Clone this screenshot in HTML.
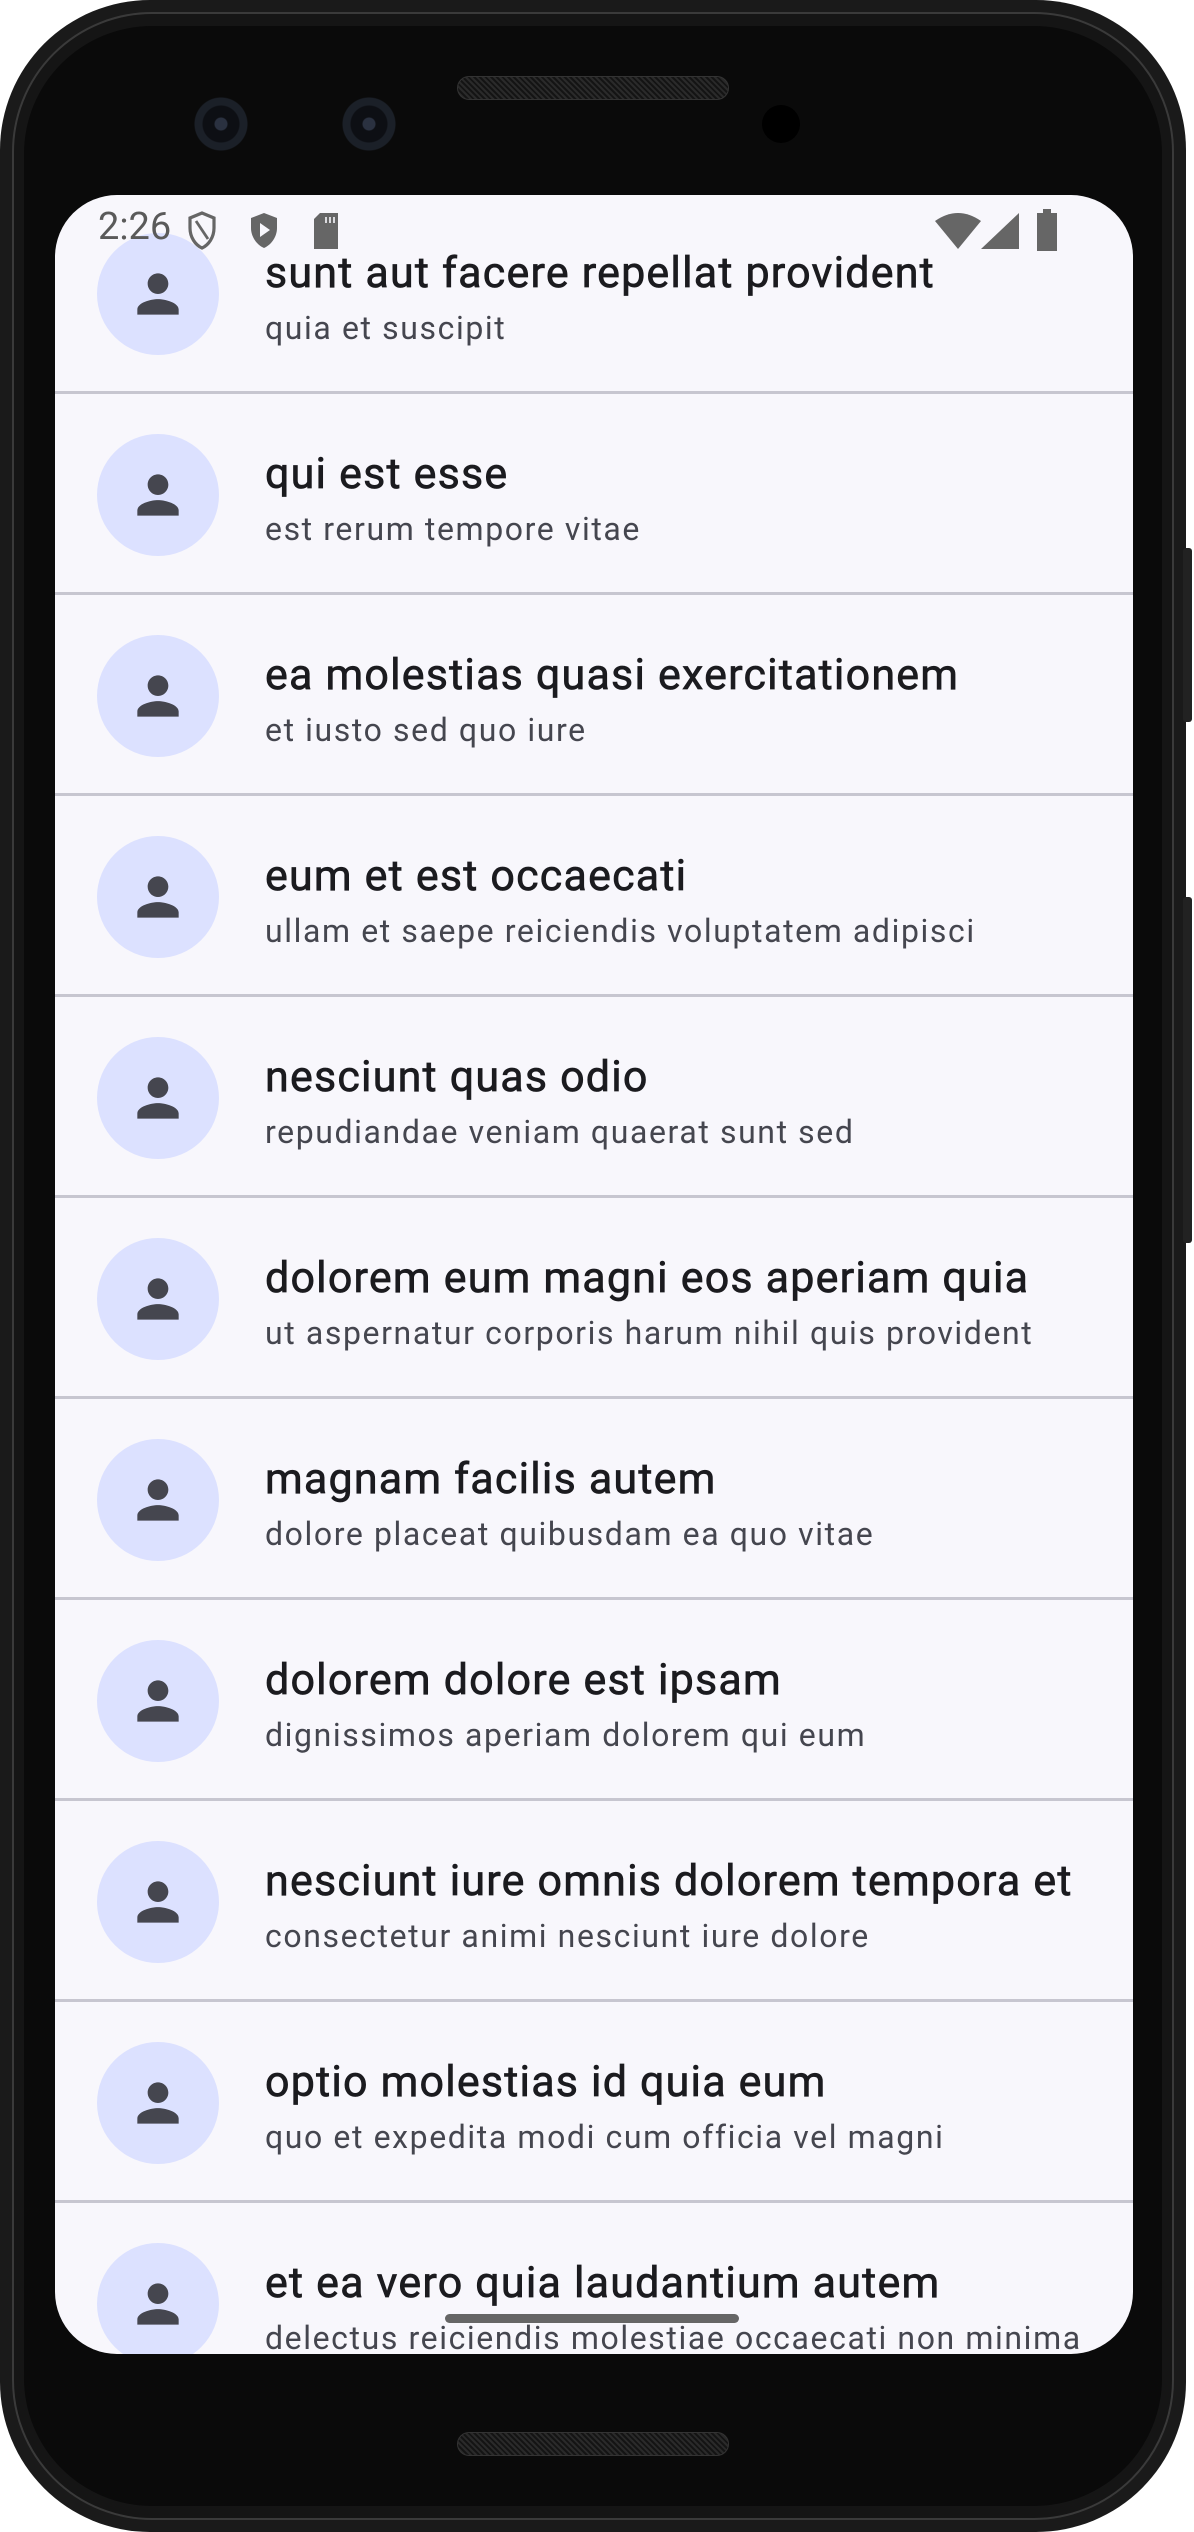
<!DOCTYPE html>
<html><head><meta charset="utf-8"><style>
*{margin:0;padding:0;box-sizing:border-box}
html,body{width:1194px;height:2532px;background:#fff;overflow:hidden}
body{position:relative;font-family:"Roboto","Liberation Sans",sans-serif}
.phone{position:absolute;left:0;top:0;width:1186px;height:2532px;background:#1a1a1a;border-radius:150px;}
.bez{position:absolute;left:12px;top:12px;right:12px;bottom:12px;border-radius:140px;background:#151515;border:2px solid #3a3a3a}
.inner{position:absolute;left:24px;top:26px;right:24px;bottom:26px;border-radius:128px;background:#0a0a0a}
.btn{position:absolute;left:1183px;width:9px;background:#222;border-radius:3px}
.spk{position:absolute;left:457px;width:272px;height:24px;border-radius:12px;background:repeating-linear-gradient(45deg,#2a2a2a 0 2px,#141414 2px 4px);border:1px solid #333}
.cam{position:absolute;width:56px;height:56px;border-radius:50%;background:radial-gradient(circle,#2a3140 0 6px,#0d0f14 7px 18px,#1b2028 19px 26px,#0a0a0a 27px)}
.screen{position:absolute;left:55px;top:195px;width:1078px;height:2159px;border-radius:62px;background:#f8f7fc;overflow:hidden}
.row{position:absolute;left:0;width:1078px;height:201px;border-bottom:3px solid #c7c6d0}
.av{position:absolute;left:42px;top:40px;width:122px;height:122px;border-radius:50%;background:#dce1ff}
.av svg{position:absolute;left:30px;top:30px;width:62px;height:62px}
.t{position:absolute;left:210px;top:55px;font-size:43px;color:#1b1b1f;white-space:nowrap;letter-spacing:1.2px;-webkit-text-stroke:0.7px #1b1b1f}
.s{position:absolute;left:210px;top:116px;font-size:32px;color:#45464f;white-space:nowrap;letter-spacing:1.6px}
.sb{position:absolute;left:0;top:0;width:1078px;height:70px}
.time{position:absolute;left:43px;top:10px;font-size:38px;color:#5a5a5a}
.home{position:absolute;left:390px;top:2119px;width:294px;height:9px;border-radius:5px;background:#666}
</style></head><body>
<div class="phone"><div class="bez"></div><div class="inner"></div></div>
<div class="btn" style="top:548px;height:174px"></div>
<div class="btn" style="top:897px;height:346px"></div>
<div class="spk" style="top:76px"></div>
<div class="spk" style="top:2432px"></div>
<div class="cam" style="left:193px;top:96px"></div>
<div class="cam" style="left:341px;top:96px"></div>
<div style="position:absolute;left:762px;top:105px;width:38px;height:38px;border-radius:50%;background:#000"></div>

<div class="screen">
<div class="row" style="top:-2px"><div class="av"><svg viewBox="0 0 24 24"><path fill="#45464f" d="M12 12c2.21 0 4-1.79 4-4s-1.79-4-4-4-4 1.79-4 4 1.79 4 4 4zm0 2c-2.67 0-8 1.34-8 4v2h16v-2c0-2.66-5.33-4-8-4z"/></svg></div><div class="t">sunt aut facere repellat provident</div><div class="s">quia et suscipit</div></div>
<div class="row" style="top:199px"><div class="av"><svg viewBox="0 0 24 24"><path fill="#45464f" d="M12 12c2.21 0 4-1.79 4-4s-1.79-4-4-4-4 1.79-4 4 1.79 4 4 4zm0 2c-2.67 0-8 1.34-8 4v2h16v-2c0-2.66-5.33-4-8-4z"/></svg></div><div class="t">qui est esse</div><div class="s">est rerum tempore vitae</div></div>
<div class="row" style="top:400px"><div class="av"><svg viewBox="0 0 24 24"><path fill="#45464f" d="M12 12c2.21 0 4-1.79 4-4s-1.79-4-4-4-4 1.79-4 4 1.79 4 4 4zm0 2c-2.67 0-8 1.34-8 4v2h16v-2c0-2.66-5.33-4-8-4z"/></svg></div><div class="t">ea molestias quasi exercitationem</div><div class="s">et iusto sed quo iure</div></div>
<div class="row" style="top:601px"><div class="av"><svg viewBox="0 0 24 24"><path fill="#45464f" d="M12 12c2.21 0 4-1.79 4-4s-1.79-4-4-4-4 1.79-4 4 1.79 4 4 4zm0 2c-2.67 0-8 1.34-8 4v2h16v-2c0-2.66-5.33-4-8-4z"/></svg></div><div class="t">eum et est occaecati</div><div class="s">ullam et saepe reiciendis voluptatem adipisci</div></div>
<div class="row" style="top:802px"><div class="av"><svg viewBox="0 0 24 24"><path fill="#45464f" d="M12 12c2.21 0 4-1.79 4-4s-1.79-4-4-4-4 1.79-4 4 1.79 4 4 4zm0 2c-2.67 0-8 1.34-8 4v2h16v-2c0-2.66-5.33-4-8-4z"/></svg></div><div class="t">nesciunt quas odio</div><div class="s">repudiandae veniam quaerat sunt sed</div></div>
<div class="row" style="top:1003px"><div class="av"><svg viewBox="0 0 24 24"><path fill="#45464f" d="M12 12c2.21 0 4-1.79 4-4s-1.79-4-4-4-4 1.79-4 4 1.79 4 4 4zm0 2c-2.67 0-8 1.34-8 4v2h16v-2c0-2.66-5.33-4-8-4z"/></svg></div><div class="t">dolorem eum magni eos aperiam quia</div><div class="s">ut aspernatur corporis harum nihil quis provident</div></div>
<div class="row" style="top:1204px"><div class="av"><svg viewBox="0 0 24 24"><path fill="#45464f" d="M12 12c2.21 0 4-1.79 4-4s-1.79-4-4-4-4 1.79-4 4 1.79 4 4 4zm0 2c-2.67 0-8 1.34-8 4v2h16v-2c0-2.66-5.33-4-8-4z"/></svg></div><div class="t">magnam facilis autem</div><div class="s">dolore placeat quibusdam ea quo vitae</div></div>
<div class="row" style="top:1405px"><div class="av"><svg viewBox="0 0 24 24"><path fill="#45464f" d="M12 12c2.21 0 4-1.79 4-4s-1.79-4-4-4-4 1.79-4 4 1.79 4 4 4zm0 2c-2.67 0-8 1.34-8 4v2h16v-2c0-2.66-5.33-4-8-4z"/></svg></div><div class="t">dolorem dolore est ipsam</div><div class="s">dignissimos aperiam dolorem qui eum</div></div>
<div class="row" style="top:1606px"><div class="av"><svg viewBox="0 0 24 24"><path fill="#45464f" d="M12 12c2.21 0 4-1.79 4-4s-1.79-4-4-4-4 1.79-4 4 1.79 4 4 4zm0 2c-2.67 0-8 1.34-8 4v2h16v-2c0-2.66-5.33-4-8-4z"/></svg></div><div class="t">nesciunt iure omnis dolorem tempora et</div><div class="s">consectetur animi nesciunt iure dolore</div></div>
<div class="row" style="top:1807px"><div class="av"><svg viewBox="0 0 24 24"><path fill="#45464f" d="M12 12c2.21 0 4-1.79 4-4s-1.79-4-4-4-4 1.79-4 4 1.79 4 4 4zm0 2c-2.67 0-8 1.34-8 4v2h16v-2c0-2.66-5.33-4-8-4z"/></svg></div><div class="t">optio molestias id quia eum</div><div class="s">quo et expedita modi cum officia vel magni</div></div>
<div class="row" style="top:2008px"><div class="av"><svg viewBox="0 0 24 24"><path fill="#45464f" d="M12 12c2.21 0 4-1.79 4-4s-1.79-4-4-4-4 1.79-4 4 1.79 4 4 4zm0 2c-2.67 0-8 1.34-8 4v2h16v-2c0-2.66-5.33-4-8-4z"/></svg></div><div class="t">et ea vero quia laudantium autem</div><div class="s">delectus reiciendis molestiae occaecati non minima</div></div>

<div class="sb">
<div class="time">2:26</div>
<svg style="position:absolute;left:131px;top:16px" width="32" height="40" viewBox="0 0 16 20"><path d="M8 1L2 3.5v5C2 13 4.6 17 8 18.5 11.4 17 14 13 14 8.5v-5z" fill="none" stroke="#666" stroke-width="1.6"/><path d="M5 5l6 9" stroke="#666" stroke-width="1.4"/></svg>
<svg style="position:absolute;left:193px;top:16px" width="32" height="40" viewBox="0 0 16 20"><path d="M8 1L1.5 3.5v5C1.5 13 4.5 17 8 18.5 11.5 17 14.5 13 14.5 8.5v-5z" fill="#666"/><path d="M6 6v7l5-3.5z" fill="#f8f7fc"/></svg>
<svg style="position:absolute;left:257px;top:16px" width="28" height="40" viewBox="0 0 14 20"><path d="M4 1h9v18H1V4z" fill="#666"/><path d="M7 3v3M9 3v3M11 3v3" stroke="#f8f7fc" stroke-width="0.8"/></svg>
<svg style="position:absolute;left:880px;top:16px" width="46" height="40" viewBox="0 0 23 20"><path d="M0 5Q11.5-3 23 5L11.5 19z" fill="#666"/></svg>
<svg style="position:absolute;left:926px;top:18px" width="38" height="36" viewBox="0 0 19 18"><path d="M19 0v18H0z" fill="#666"/></svg>
<svg style="position:absolute;left:982px;top:14px" width="20" height="42" viewBox="0 0 10 21"><path d="M3 0h4v2h3v19H0V2h3z" fill="#666"/></svg>
</div>
<div class="home"></div>
</div>
</body></html>
